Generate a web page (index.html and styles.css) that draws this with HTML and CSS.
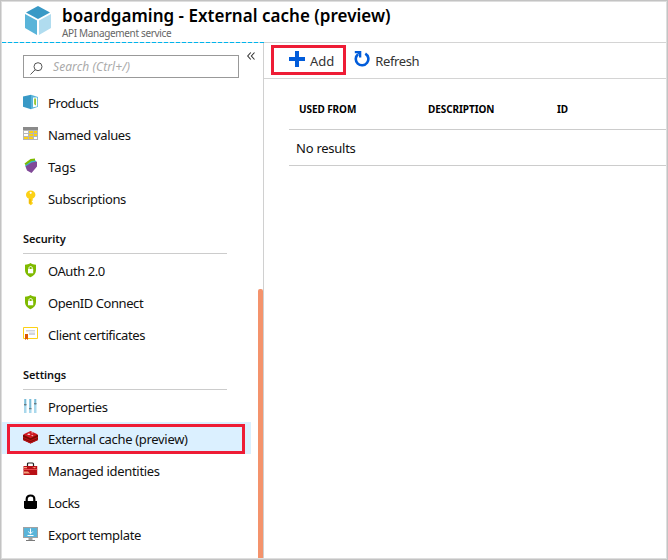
FILE: index.html
```html
<!DOCTYPE html>
<html lang="en">
<head>
<meta charset="utf-8">
<title>boardgaming - External cache (preview)</title>
<link rel="stylesheet" href="styles.css">
</head>
<body>
<div class="window">
  <header class="header">
    <svg class="logo" viewBox="0 0 26 29"><path fill="#3999c6" d="M13 0 25 6.500 13 13 1 6.500z"/><path fill="#59b4d9" d="M0 8l12 6.500V29L0 22z"/><path fill="#b0dcef" d="M26 8 14 14.500V29l12-7z"/></svg>
    <div class="heading">
      <h1>boardgaming - External cache (preview)</h1>
      <p>API Management service</p>
    </div>
  </header>
  <div class="body">
    <nav class="sidebar">
      <div class="search-row">
        <div class="search">
          <svg width="13" height="13" viewBox="0 0 13 13" fill="none" stroke="#555"><circle cx="8" cy="4.700" r="4"/><path d="M5.200 7.700.5 12.500"/></svg>
          <span class="placeholder">Search (Ctrl+/)</span>
        </div>
        <svg class="collapse" width="8" height="8" viewBox="0 0 8 8" fill="none" stroke="#333" stroke-width="1.100"><path d="M3.800.5.700 4l3.100 3.500M7.500.5 4.400 4l3.100 3.500"/></svg>
      </div>
      <ul class="menu">
        <li><svg viewBox="0 0 16 16"><path fill="#3999c6" d="M0 2.500 8 .7v14.600L0 12.800z"/><path fill="#59b4d9" d="M8 .7 15 3v9.700L8 15.300z"/><path fill="#fff" d="M10 3.500h4.200v9L10 13.200z"/><path fill="#7fba00" d="M11.300 4.500h1.500v7l-1.500-1.300z"/></svg><span class="t-products">Products</span></li>
        <li><svg viewBox="0 0 16 16"><path fill="#b5b6b7" d="M0 1h15v13H0z"/><path fill="#8a8a8a" d="M0 1h15v3H0z"/><path fill="#fff" d="M1 5h4v2H1zM1 8h4v2H1z"/><path fill="#fcd116" d="M6 5h4v2H6zM11 5h3v2h-3zM6 8h4v2H6zM11 8h3v2h-3zM1 11h4v2H1zM6 11h4v2H6z"/><path fill="#fff" d="M11 11h3v2h-3z"/></svg><span>Named values</span></li>
        <li><svg viewBox="0 0 16 16"><path fill="#7fba00" d="M1.500 5.500 7.500 1 12 .5V4L4.500 10z"/><path fill="#3db5c8" d="M2 7.500 8.500 3l4.500-.5V5L4 11z"/><path fill="#804998" d="M2.500 8.500 8.500 4.500 14 3.500v5L8.500 15 4 12.500z"/></svg><span class="t-tags">Tags</span></li>
        <li><svg viewBox="0 0 16 16"><path fill="#fcd116" d="M7.700.5C5 .5 3 2.200 3 4.700c0 1.800 1 3.100 2.700 3.800v5l2 1.800 2-1.500v-1.200l-1-1 1-1V8.500c1.700-.7 2.700-2 2.700-3.800C12.400 2.200 10.400.5 7.700.5z"/><circle cx="7.700" cy="2.800" r="1.100" fill="#fff"/><path stroke="#e3a500" d="M7 9v4.500"/></svg><span>Subscriptions</span></li>
      </ul>
      <h2>Security</h2>
      <ul class="menu">
        <li><svg viewBox="0 0 16 16"><path fill="#7fba00" d="M7.500 1C6 2 4.200 2.700 2 2.800V8c0 3.500 2.500 5.800 5.500 7.300C10.700 13.800 13 11.500 13 8V2.800C10.800 2.700 9 2 7.500 1z"/><path fill="#fff" d="M5 7h5.200v4.300H5z"/><path fill="none" stroke="#fff" d="M6 7.200V6c0-2 3.200-2 3.200 0v1.200"/></svg><span class="t-oauth">OAuth 2.0</span></li>
        <li><svg viewBox="0 0 16 16"><path fill="#7fba00" d="M7.500 1C6 2 4.200 2.700 2 2.800V8c0 3.500 2.500 5.800 5.500 7.300C10.700 13.800 13 11.500 13 8V2.800C10.800 2.700 9 2 7.500 1z"/><path fill="#fff" d="M5 7h5.200v4.300H5z"/><path fill="none" stroke="#fff" d="M6 7.200V6c0-2 3.200-2 3.200 0v1.200"/></svg><span class="t-openid">OpenID Connect</span></li>
        <li><svg viewBox="0 0 16 16"><path fill="#fff" stroke="#fcd116" d="M.5 1.500h14v11H.5z"/><path fill="#d0d4dc" d="M3 4h9v1.500H3zM6 6.500h6V9H6z"/><path fill="#dd5900" d="M2 8h3v6l-1.500-1.200L2 14z"/></svg><span class="t-client">Client certificates</span></li>
      </ul>
      <h2>Settings</h2>
      <ul class="menu">
        <li><svg viewBox="0 0 16 16"><path fill="#a9d8ec" d="M1 1h2.500v14H1zM6 1h2.500v14H6zM11 1h2.500v14H11z"/><path fill="#68afcc" d="M1.700 1h1v7h-1zM6.700 1h1v10h-1zM11.700 1h1v6h-1z"/><path fill="#6b7b82" d="M1 6h2.500v1.200H1zM6 10h2.500v1.200H6zM11 5h2.500v1.200H11z"/></svg><span class="t-props">Properties</span></li>
        <li class="selected"><svg viewBox="0 0 16 16"><path fill="#7a0c00" d="M0 5v5l7.500 3.500L15 10V5z"/><path fill="#b80f16" d="M0 9 7.500 12 15 9v1l-7.500 3.500L0 10zM0 6.700 7.500 10 15 6.700V8l-7.500 3.300L0 8z"/><path fill="#d01820" d="M0 4.500 7.500 1 15 4.500 7.500 8.200z"/><path fill="#fff" d="m4 4.200 2-.8 1.500.8L6 5zM8 2.800l2-.3-.7 1zM8 5.700l2.500-.7-1 1.200z"/></svg><span class="t-external">External cache (preview)</span></li>
        <li><svg viewBox="0 0 16 16"><path fill="none" stroke="#222" stroke-width="1.200" d="M4.500 4V2q0-1 1-1h4q1 0 1 1v2"/><path fill="#b80f16" d="M.5 4h13.700v9H.5z"/><path fill="#e84b50" d="M.5 7h13.700v1H.5z"/><path fill="#f4a17b" d="M1 5h3v1.200H1zM1 9.500h4l2 2H1zM9 5.500l4-.7-1 1.500z"/></svg><span class="t-managed">Managed identities</span></li>
        <li><svg viewBox="0 0 16 16"><path fill="#000" d="M1 7h13v6.500L13 15H2l-1-1.500z"/><path fill="none" stroke="#000" stroke-width="2.200" d="M3.700 7.500V5c0-4.700 7.600-4.700 7.600 0v2.500"/></svg><span class="t-locks">Locks</span></li>
        <li><svg viewBox="0 0 16 16"><path fill="#a0a1a2" d="M0 1h15v11H0zM5.500 12h4v2h-4z"/><path fill="#59b4d9" d="M1 2h13v9H1z"/><path fill="#7a7a7a" d="M3 14h9v1H3z"/><path fill="none" stroke="#fff" d="M7.500 2.500v5M5.200 5.500l2.300 2.300 2.300-2.300M4.500 9.500h6"/></svg><span>Export template</span></li>
      </ul>
      <div class="scrollbar"></div>
      <div class="mark mark-menu"></div>
    </nav>
    <main class="content">
      <div class="toolbar">
        <div class="command"><svg width="16" height="16" viewBox="0 0 16 16"><path fill="#015cda" d="M6 0h4v6h6v4h-6v6H6v-6H0V6h6z"/></svg><span>Add</span></div>
        <div class="command refresh"><svg width="16" height="17" viewBox="0 0 16 17"><path fill="none" stroke="#015cda" stroke-width="2.600" d="M11.300 2.600A6.300 6.300 0 1 1 4 3.200"/><path fill="#015cda" d="M.8 0h6.500v6.500H5V4L3.300 2.300H.8z"/></svg><span class="t-refresh">Refresh</span></div>
        <div class="mark mark-add"></div>
      </div>
      <div class="table">
        <div class="thead"><span>USED FROM</span><span>DESCRIPTION</span><span>ID</span></div>
        <div class="empty"><span class="t-none">No results</span></div>
      </div>
    </main>
  </div>
</div>
</body>
</html>
```
FILE: styles.css
```css
* { box-sizing: border-box; }
body { margin: 0; font: 13px/18px "Noto Sans", "Open Sans", sans-serif; color: #111; background: #fff; }
h1, h2, p, ul { margin: 0; padding: 0; }
ul { list-style: none; }
span { white-space: nowrap; }
.window { width: 668px; height: 560px; border: 1px solid #c3c3c3; box-shadow: inset 0 0 0 1px #dedede; padding: 1px; overflow: hidden; display: flex; flex-direction: column; }
.header { height: 41px; flex: none; display: flex; gap: 11px; padding: 4px 0 0 23px; border-bottom: 1px solid #d4d4d4; position: relative; }
.header::after { content: ""; position: absolute; left: 0; bottom: -1px; width: 262px; height: 1px; background: repeating-linear-gradient(90deg, #00b4ec 0 4px, #c3dde6 4px 6px); }
.logo { width: 26px; height: 29px; }
.heading { margin-top: -1px; }
h1 { font-size: 17px; line-height: 22px; font-weight: 600; color: #000; letter-spacing: 0.02px; }
.header p { font-size: 10px; line-height: 12px; color: #666; letter-spacing: -0.34px; }
.body { flex: 1; display: flex; min-height: 0; }
.sidebar { width: 262px; border-right: 1px solid #d0d0d0; position: relative; }
.search-row { height: 43px; padding: 12px 0 0 21px; display: flex; gap: 8px; }
.search { width: 216px; height: 23px; border: 1px solid #999; display: flex; align-items: center; gap: 10px; padding-left: 6px; }
.search svg { margin-top: 3px; }
.placeholder { font-size: 12px; font-style: italic; color: #aaa; letter-spacing: 0.08px; }
.collapse { margin-top: -3px; }
.menu li { height: 32px; display: flex; align-items: center; gap: 9px; padding-left: 21px; }
.menu svg { width: 16px; height: 16px; flex: none; }
.menu span { padding-top: 2px; letter-spacing: -0.35px; }
.menu .t-products, .menu .t-client { letter-spacing: -0.42px; }
.menu .t-oauth, .menu .t-openid { letter-spacing: -0.43px; }
.menu .t-external, .menu .t-managed { letter-spacing: -0.32px; }
.menu .t-locks { letter-spacing: -0.5px; }
.menu .t-tags { letter-spacing: 0; }
.menu .selected { background: #dbf0ff; width: 249px; }
h2 { height: 40px; margin: 0 36px 0 21px; font-size: 11px; line-height: 14px; font-weight: 600; letter-spacing: -0.1px; padding-top: 18px; }
h2::after { content: ""; display: block; height: 1px; margin-top: 7px; background: #ccc; }
.scrollbar { position: absolute; right: 0; top: 246px; bottom: 0; width: 5px; background: #f4936c; border-radius: 2px 2px 0 0; }
.mark { position: absolute; border: 3px solid #ee1c35; }
.mark-menu { left: 5px; top: 381px; width: 238px; height: 30px; }
.mark-add { left: 7px; top: 2px; width: 75px; height: 30px; }
.content { flex: 1; }
.toolbar { height: 36px; border-bottom: 1px solid #d4d4d4; position: relative; display: flex; align-items: center; gap: 20px; padding-left: 25px; color: #333; }
.command { display: flex; align-items: center; gap: 5px; }
.command svg { margin-top: -3px; }
.command span { padding-top: 1px; }
.t-refresh { letter-spacing: -0.4px; }
.t-none { letter-spacing: -0.25px; }
.table { padding-left: 25px; }
.thead { height: 51px; border-bottom: 1px solid #ccc; display: grid; grid-template-columns: 129px 129px 1fr; align-items: center; padding: 9px 0 0 10px; font-size: 10px; line-height: 14px; font-weight: 700; letter-spacing: -0.08px; color: #000; }
.empty { height: 36px; border-bottom: 1px solid #ccc; padding: 9px 0 0 7px; }
```
